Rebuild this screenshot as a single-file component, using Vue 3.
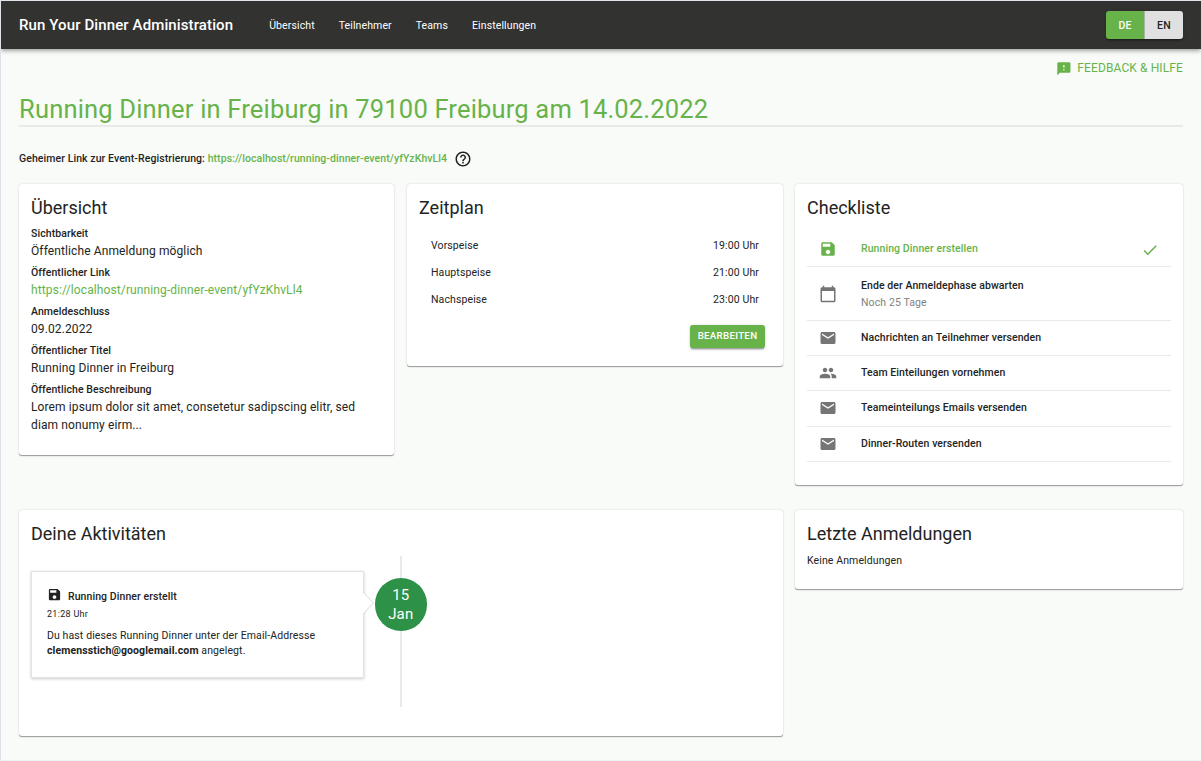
<script setup>
const icons = {
  save: 'M17 3H5c-1.11 0-2 .9-2 2v14c0 1.1.89 2 2 2h14c1.1 0 2-.9 2-2V7l-4-4zm-5 16c-1.66 0-3-1.34-3-3s1.34-3 3-3 3 1.34 3 3-1.34 3-3 3zm3-10H5V5h10v4z',
  calendar: 'M20 3h-1V1h-2v2H7V1H5v2H4c-1.1 0-2 .9-2 2v16c0 1.1.9 2 2 2h16c1.1 0 2-.9 2-2V5c0-1.1-.9-2-2-2zm0 18H4V8h16v13z',
  mail: 'M20 4H4c-1.1 0-1.99.9-1.99 2L2 18c0 1.1.9 2 2 2h16c1.1 0 2-.9 2-2V6c0-1.1-.9-2-2-2zm0 4l-8 5-8-5V6l8 5 8-5v2z',
  group: 'M16 11c1.66 0 2.99-1.34 2.99-3S17.66 5 16 5c-1.66 0-3 1.34-3 3s1.34 3 3 3zm-8 0c1.66 0 2.99-1.34 2.99-3S9.66 5 8 5C6.34 5 5 6.34 5 8s1.34 3 3 3zm0 2c-2.33 0-7 1.17-7 3.5V19h14v-2.5c0-2.33-4.67-3.5-7-3.5zm8 0c-.29 0-.62.02-.97.05 1.16.84 1.97 1.97 1.97 3.45V19h6v-2.5c0-2.33-4.67-3.5-7-3.5z',
  check: 'M9 16.17L4.83 12l-1.42 1.41L9 19 21 7l-1.41-1.41z',
  feedback: 'M20 2H4c-1.1 0-1.99.9-1.99 2L2 22l4-4h14c1.1 0 2-.9 2-2V4c0-1.1-.9-2-2-2zm-7 12h-2v-2h2v2zm0-4h-2V6h2v4z',
  help: 'M11 18h2v-2h-2v2zm1-16C6.48 2 2 6.48 2 12s4.48 10 10 10 10-4.48 10-10S17.52 2 12 2zm0 18c-4.41 0-8-3.59-8-8s3.59-8 8-8 8 3.59 8 8-3.59 8-8 8zm0-14c-2.21 0-4 1.79-4 4h2c0-1.1.9-2 2-2s2 .9 2 2c0 2-3 1.75-3 5h2c0-2.25 3-2.5 3-5 0-2.21-1.79-4-4-4z'
}
const nav = ['Übersicht', 'Teilnehmer', 'Teams', 'Einstellungen']
const link = 'https://localhost/running-dinner-event/yfYzKhvLl4'
const details = [
  { label: 'Sichtbarkeit', value: 'Öffentliche Anmeldung möglich' },
  { label: 'Öffentlicher Link', value: link, link: true },
  { label: 'Anmeldeschluss', value: '09.02.2022' },
  { label: 'Öffentlicher Titel', value: 'Running Dinner in Freiburg' },
  { label: 'Öffentliche Beschreibung', value: 'Lorem ipsum dolor sit amet, consetetur sadipscing elitr, sed diam nonumy eirm...' }
]
const meals = [
  { name: 'Vorspeise', time: '19:00 Uhr' },
  { name: 'Hauptspeise', time: '21:00 Uhr' },
  { name: 'Nachspeise', time: '23:00 Uhr' }
]
const tasks = [
  { icon: 'save', text: 'Running Dinner erstellen', done: true },
  { icon: 'calendar', text: 'Ende der Anmeldephase abwarten', sub: 'Noch 25 Tage' },
  { icon: 'mail', text: 'Nachrichten an Teilnehmer versenden' },
  { icon: 'group', text: 'Team Einteilungen vornehmen' },
  { icon: 'mail', text: 'Teameinteilungs Emails versenden' },
  { icon: 'mail', text: 'Dinner-Routen versenden' }
]
</script>

<template>
  <div class="page">
    <header class="bar">
      <span class="brand">Run Your Dinner Administration</span>
      <nav class="nav">
        <a v-for="n in nav" :key="n">{{ n }}</a>
      </nav>
      <div class="lang">
        <button class="lang-btn active">DE</button>
        <button class="lang-btn">EN</button>
      </div>
    </header>

    <main class="content">
      <div class="feedback">
        <svg class="icon-feedback" viewBox="0 0 24 24"><path :d="icons.feedback" /></svg>
        <span>FEEDBACK &amp; HILFE</span>
      </div>
      <h1 class="title">Running Dinner in Freiburg in 79100 Freiburg am 14.02.2022</h1>
      <div class="secret">
        <span>Geheimer Link zur Event-Registrierung: <a class="green">{{ link }}</a></span>
        <svg class="icon help" viewBox="0 0 24 24"><path :d="icons.help" /></svg>
      </div>

      <div class="row top">
        <section class="card overview">
          <h2>Übersicht</h2>
          <div class="details">
            <div v-for="d in details" :key="d.label" class="detail">
              <div class="label">{{ d.label }}</div>
              <div class="value" :class="{ green: d.link }">{{ d.value }}</div>
            </div>
          </div>
        </section>

        <section class="card">
          <h2>Zeitplan</h2>
          <div class="meals">
            <div v-for="m in meals" :key="m.name" class="meal">
              <span>{{ m.name }}</span><span>{{ m.time }}</span>
            </div>
          </div>
          <div class="actions"><button class="edit">BEARBEITEN</button></div>
        </section>

        <section class="card">
          <h2>Checkliste</h2>
          <ul class="tasks">
            <li v-for="t in tasks" :key="t.text" class="task" :class="{ done: t.done }">
              <svg class="icon" viewBox="0 0 24 24"><path :d="icons[t.icon]" /></svg>
              <div class="task-text" :class="{ double: t.sub }">
                <div>{{ t.text }}</div>
                <div v-if="t.sub" class="sub">{{ t.sub }}</div>
              </div>
              <svg v-if="t.done" class="icon check" viewBox="0 0 24 24"><path :d="icons.check" /></svg>
            </li>
          </ul>
        </section>
      </div>

      <div class="row bottom">
        <section class="card activities">
          <h2>Deine Aktivitäten</h2>
          <div class="timeline">
            <article class="event">
              <div class="event-title">
                <svg class="icon-event" viewBox="0 0 24 24"><path :d="icons.save" /></svg>
                <span>Running Dinner erstellt</span>
              </div>
              <div class="event-time">21:28 Uhr</div>
              <p>Du hast dieses Running Dinner unter der Email-Addresse <b>clemensstich@googlemail.com</b> angelegt.</p>
              <svg class="arrow" viewBox="0 0 11 22"><path d="M0 0L10.5 11L0 22" /></svg>
            </article>
            <div class="axis">
              <div class="date"><span>15</span><span>Jan</span></div>
            </div>
          </div>
        </section>
        <section class="card latest">
          <h2>Letzte Anmeldungen</h2>
          <p>Keine Anmeldungen</p>
        </section>
      </div>
    </main>
  </div>
</template>

<style>
body { background: #f9fbf9; }
</style>

<style scoped>
* { box-sizing: border-box; }
.page {
  height: 761px;
  overflow: hidden;
  border: 1px solid #dde3e6;
  border-right: 0;
  border-bottom-color: #eef1f5;
  background: #f9fbf9;
  color: #232323;
  font-family: Roboto, "Liberation Sans", sans-serif;
  font-size: 10.5px;
  letter-spacing: 0.01071em;
}
h1, h2, p, ul { margin: 0; padding: 0; }
svg { fill: currentColor; flex: none; display: block; }
button { border: 0; font-family: inherit; }
.green { color: #67b34a; }

.bar {
  position: relative;
  height: 48px;
  display: flex;
  align-items: center;
  padding: 0 18px;
  background: #323230;
  color: #fff;
  box-shadow: 0 1.5px 3px -0.75px rgba(0,0,0,.2), 0 3px 3.75px rgba(0,0,0,.14), 0 0.75px 7.5px rgba(0,0,0,.12);
}
.brand { font-size: 15px; font-weight: 500; letter-spacing: 0.0075em; }
.nav { display: flex; gap: 24px; margin-left: 36px; }
.lang {
  display: flex;
  margin: 0 0 0.5px auto;
  border-radius: 3px;
  box-shadow: 0 2.25px 0.75px -1.5px rgba(0,0,0,.2), 0 1.5px 1.5px rgba(0,0,0,.14), 0 0.75px 3.75px rgba(0,0,0,.12);
}
.lang-btn {
  height: 27.5px;
  width: 38px;
  padding: 0.5px 0 0;
  font-size: 10.5px;
  font-weight: 500;
  letter-spacing: 0.02857em;
  background: #dfe0df;
  color: #232323;
  border-radius: 0 3px 3px 0;
}
.lang-btn.active {
  width: 38.75px;
  background: #67b34a;
  color: #fff;
  border-right: 1px solid #a9b5a4;
  border-radius: 3px 0 0 3px;
}

.content { padding: 0 18px; }
.feedback {
  height: 38px;
  display: flex;
  align-items: center;
  justify-content: flex-end;
  gap: 5.5px;
  color: #67b34a;
  font-size: 12px;
  letter-spacing: 0.00938em;
}
.icon-feedback { width: 15.75px; height: 15.75px; margin-top: 1px; }
.title {
  margin-top: 6px;
  height: 34px;
  padding-top: 1px;
  color: #67b34a;
  font-size: 25.5px;
  font-weight: 400;
  line-height: 31.5px;
  letter-spacing: 0.007em;
  border-bottom: 2px solid #e8eae8;
}
.secret {
  height: 18px;
  margin: 22px 0 16.5px;
  display: flex;
  align-items: center;
  gap: 6.6px;
  font-weight: 500;
  letter-spacing: 0.00714em;
}
.icon { width: 18px; height: 18px; }
.help { position: relative; top: 1px; }

.row { display: grid; column-gap: 12px; align-items: start; }
.top { grid-template-columns: 376px 376px 1fr; height: 326.25px; }
.bottom { grid-template-columns: 764px 1fr; }
.card {
  background: #fefffe;
  border-radius: 3px;
  padding: 12px 12px 17.5px;
  box-shadow: 0 1.5px 0.75px -0.75px rgba(0,0,0,.2), 0 0.75px 0.75px rgba(0,0,0,.14), 0 0.75px 2.25px rgba(0,0,0,.12);
}
.overview { margin-right: 0.6px; }
h2 { font-size: 18px; font-weight: 400; line-height: 24px; letter-spacing: 0; }
.details { padding: 1.25px 0 3.5px; }
.detail { padding-top: 4.5px; }
.label { font-weight: 500; line-height: 17px; letter-spacing: 0.00714em; }
.value { font-size: 12px; line-height: 18px; margin-top: -0.5px; letter-spacing: 0.00938em; }

.meals { padding: 12px 12px 0; }
.meal { height: 27px; display: flex; justify-content: space-between; align-items: center; }
.actions { display: flex; justify-content: flex-end; padding: 12px 6px 0; }
.edit {
  height: 23.5px;
  width: 75px;
  padding: 0 0 2px;
  border-radius: 3px;
  background: #67b34a;
  color: #fff;
  font-size: 9.75px;
  font-weight: 500;
  letter-spacing: 0.02857em;
  box-shadow: 0 2.25px 0.75px -1.5px rgba(0,0,0,.2), 0 1.5px 1.5px rgba(0,0,0,.14), 0 0.75px 3.75px rgba(0,0,0,.12);
}

.tasks { list-style: none; padding: 12.75px 0 6px; }
.task {
  display: flex;
  align-items: center;
  padding: 6px 12px;
  border-bottom: 1px solid #e8e9e8;
  color: #232323;
}
.task .icon { color: #757575; }
.task.done, .task.done .icon { color: #67b34a; }
.task .check { margin-top: 1px; margin-bottom: -1px; }
.task-text { flex: 1; margin: 3px 0 3.15px 24px; font-weight: 500; line-height: 16px; letter-spacing: 0.00714em; }
.task-text.double { margin: 4.5px 0 2.75px 24px; line-height: 16.75px; }
.sub { padding-top: 0.5px; margin-bottom: -0.5px; color: #828282; font-weight: 400; letter-spacing: 0.01071em; }

.activities { height: 226px; }
.timeline { display: flex; padding-top: 10px; }
.event {
  position: relative;
  width: 333px;
  height: 107px;
  margin-top: 15px;
  padding: 16px 15px;
  background: #fefffe;
  border: 1px solid #e2e3e2;
  box-shadow: 0 1px 3px rgba(0,0,0,.2);
}
.event-title { display: flex; gap: 6px; height: 16px; font-weight: 500; letter-spacing: 0.00714em; line-height: 17px; }
.icon-event { width: 15px; height: 15px; margin-top: -1px; }
.event-time { margin-top: 3px; font-size: 9px; line-height: 15px; letter-spacing: 0.03333em; }
.event p { margin-top: 6px; line-height: 15px; }
.arrow { position: absolute; left: 331px; top: 20px; width: 11px; height: 22px; fill: #fefffe; stroke: #d8d9d8; stroke-width: 1; }
.axis {
  width: 52.5px;
  height: 151px;
  margin-left: 10.5px;
  padding-top: 22.5px;
  background: linear-gradient(#e8e9e8, #e8e9e8) 25.5px 0 / 2px 100% no-repeat;
}
.date {
  width: 52.5px;
  height: 52.5px;
  padding-top: 0.75px;
  border-radius: 50%;
  background: #2e9148;
  color: #fff;
  display: flex;
  flex-direction: column;
  align-items: center;
  justify-content: center;
  font-size: 15px;
  line-height: 19px;
  letter-spacing: 0.0075em;
}
.latest { height: 79px; }
.latest p { margin-top: 7px; line-height: 15px; }
</style>
